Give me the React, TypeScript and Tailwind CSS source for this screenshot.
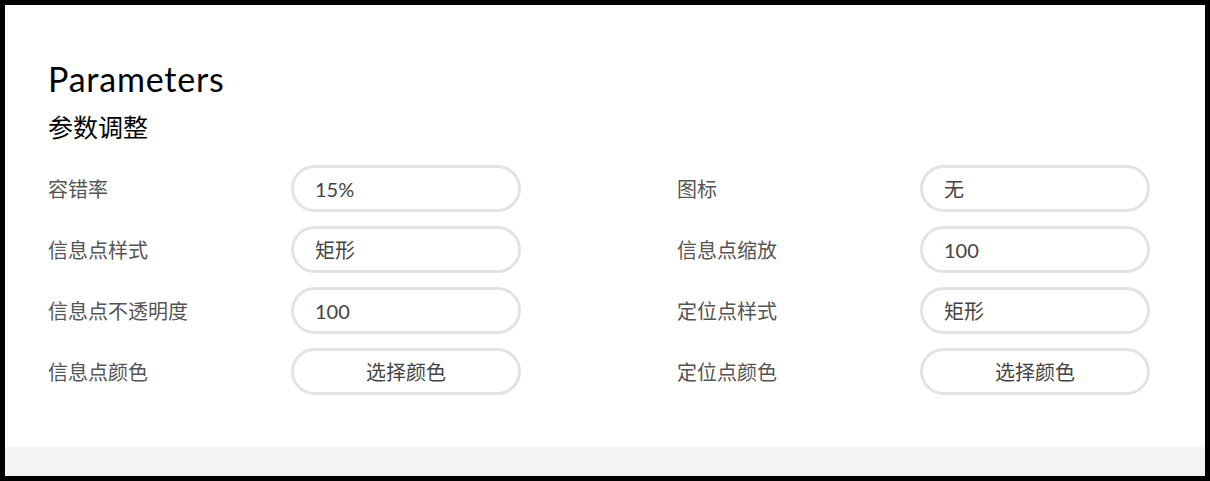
import React from 'react';

type Field = { label: string; value: string; button?: boolean };

const left: Field[] = [
  { label: '容错率', value: '15%' },
  { label: '信息点样式', value: '矩形' },
  { label: '信息点不透明度', value: '100' },
  { label: '信息点颜色', value: '选择颜色', button: true },
];

const right: Field[] = [
  { label: '图标', value: '无' },
  { label: '信息点缩放', value: '100' },
  { label: '定位点样式', value: '矩形' },
  { label: '定位点颜色', value: '选择颜色', button: true },
];

const font = "font-['Lato','Noto_Sans_CJK_SC',sans-serif]";

const Row: React.FC<{ f: Field }> = ({ f }) => (
  <div className="flex items-center">
    <div className="w-[243px] text-[20px] text-[#555]">{f.label}</div>
    {f.button ? (
      <button className="w-[230px] h-[47px] rounded-full border-[3px] border-[#e3e3e3] bg-white text-[20px] text-[#444] text-center">
        {f.value}
      </button>
    ) : (
      <div className="w-[230px] h-[47px] rounded-full border-[3px] border-[#e3e3e3] bg-white flex items-center pl-[21px] text-[20px] text-[#444]">
        {f.value}
      </div>
    )}
  </div>
);

export default function App() {
  const rows = left.map((l, i) => [l, right[i]] as const);
  return (
    <div className={`w-[1210px] h-[481px] bg-black p-[5px] ${font}`}>
      <div className="h-full flex flex-col">
        <div className="flex-1 bg-white pl-[43px] pt-[51px]">
          <h1 className="text-[34px] leading-[46px] tracking-[0.8px] text-black font-normal">Parameters</h1>
          <h2 className="text-[25px] leading-[34px] text-black font-normal mt-[8px]">参数调整</h2>
          <div className="mt-[21px] flex flex-col gap-[14px]">
            {rows.map(([a, b], i) => (
              <div key={i} className="grid grid-cols-[629px_1fr]">
                <Row f={a} />
                <Row f={b} />
              </div>
            ))}
          </div>
        </div>
        <div className="h-[29px] bg-[#f4f4f6]" />
      </div>
    </div>
  );
}
